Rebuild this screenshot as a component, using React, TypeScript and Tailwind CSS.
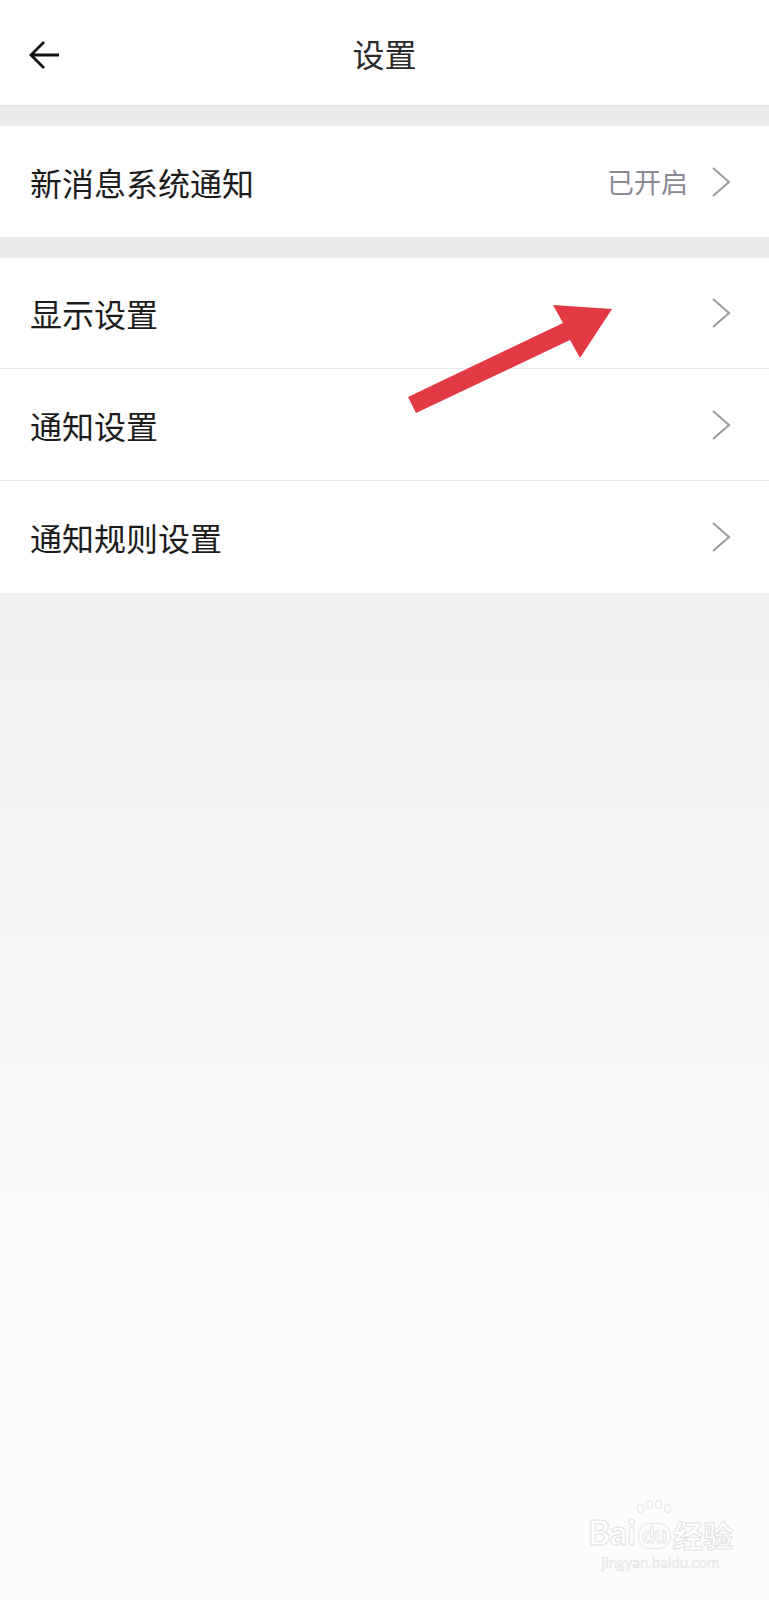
import React from 'react';

const rows = ['显示设置', '通知设置', '通知规则设置'];

function Chevron() {
  return (
    <svg width="20" height="30" viewBox="0 0 20 30" fill="none" className="shrink-0">
      <polyline points="2,1 18,15 2,29" stroke="#9b9b9b" strokeWidth="2" strokeLinejoin="miter" />
    </svg>
  );
}

function Row({ label, value, h = 'h-[112px]', last = false }: { label: string; value?: string; h?: string; last?: boolean }) {
  return (
    <div className={`flex items-center ${h} bg-white pl-[30px] pr-[38px] ${last ? '' : 'border-b border-[#ebebeb]'}`}>
      <span className="flex-1 text-[32px] text-[#1c1c1c] leading-none">{label}</span>
      {value && <span className="mr-[23px] text-[27px] text-[#8a8a94] leading-none">{value}</span>}
      <Chevron />
    </div>
  );
}

export default function App() {
  return (
    <div
      className="relative flex flex-col min-h-[1600px] bg-[#fdfdfd]"
      style={{ fontFamily: '"Noto Sans CJK SC", "Noto Sans", sans-serif' }}
    >
      <div className="relative flex items-center justify-center h-[106px] bg-white border-b border-[#e0e0e0]">
        <svg width="32" height="30" viewBox="0 0 32 30" fill="none" className="absolute left-[28px] top-[40px]">
          <path d="M31 15 H3 M16 2 L3 15 L16 28" stroke="#111" strokeWidth="2.8" />
        </svg>
        <span className="text-[32px] text-[#2a2a2a] leading-none">设置</span>
      </div>

      <div className="h-[20px] bg-[#ebebeb]" />
      <Row label="新消息系统通知" value="已开启" h="h-[111px]" last />
      <div className="h-[21px] bg-[#ebebeb]" />
      <div className="flex flex-col">
        <Row label={rows[0]} h="h-[111px]" />
        <Row label={rows[1]} />
        <Row label={rows[2]} last />
      </div>

      <div className="flex-1 bg-linear-to-b from-[#efefef] to-[#fcfcfc] to-70%" />

      <svg width="769" height="620" viewBox="0 0 769 620" className="absolute left-0 top-0 pointer-events-none">
        <polygon
          points="408,397 563,323 553,305 612,309 580,358 570,340 416,413"
          fill="#e23a45"
        />
      </svg>

      <div className="absolute left-[588px] top-[1515px] flex flex-col items-center pointer-events-none">
        <div className="relative flex items-end text-[34px] font-bold leading-none text-white [-webkit-text-stroke:1px_#e2e2e2]" style={{ fontFamily: 'Lato, sans-serif' }}>
          <span>Bai</span>
          <span className="relative ml-[2px] text-[22px] border border-[#e2e2e2] rounded-[12px] px-[3px] pb-[2px]">
            du
            <span className="absolute left-1/2 -translate-x-1/2 -top-[20px] flex gap-[2px]">
              <span className="w-[7px] h-[9px] rounded-full border border-[#e2e2e2]" />
              <span className="w-[7px] h-[9px] rounded-full border border-[#e2e2e2] -mt-[4px]" />
              <span className="w-[7px] h-[9px] rounded-full border border-[#e2e2e2] -mt-[4px]" />
              <span className="w-[7px] h-[9px] rounded-full border border-[#e2e2e2]" />
            </span>
          </span>
          <span className="ml-[2px] text-[30px]" style={{ fontFamily: '"Noto Sans CJK SC", sans-serif' }}>经验</span>
        </div>
        <span className="mt-[6px] text-[15px] text-white [-webkit-text-stroke:0.6px_#e0e0e0] leading-none" style={{ fontFamily: 'Lato, sans-serif' }}>
          jingyan.baidu.com
        </span>
      </div>
    </div>
  );
}
